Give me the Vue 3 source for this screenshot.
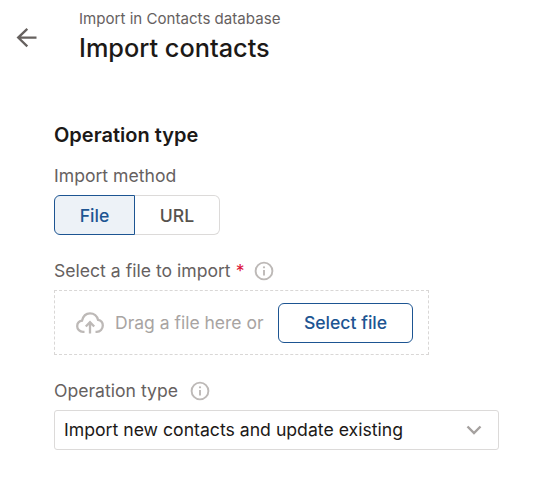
<script setup>
</script>

<template>
  <div class="page">
    <header class="head">
      <button class="back" aria-label="Back">
        <svg width="24" height="24" viewBox="0 0 24 24" fill="none" stroke="#66615f" stroke-width="2.3">
          <path d="M21.5 12.6H3.5M12.3 3.8L3.2 12.6L12.3 21.4" />
        </svg>
      </button>
      <div class="titles">
        <div class="crumb">Import in Contacts database</div>
        <h1 class="title">Import contacts</h1>
      </div>
    </header>
    <main class="form">
      <h2 class="section">Operation type</h2>
      <div class="label first">Import method</div>
      <div class="toggle">
        <button class="seg active">File</button>
        <button class="seg">URL</button>
      </div>
      <div class="label second">
        <span>Select a file to import</span><span class="req">*</span>
        <svg class="info" width="20" height="20" viewBox="0 0 20 20" fill="none">
          <circle cx="10" cy="10" r="8.4" stroke="#bdb9b7" stroke-width="1.9" />
          <circle cx="10" cy="6.3" r="1.1" fill="#bdb9b7" />
          <path d="M10 9v5.5" stroke="#bdb9b7" stroke-width="1.9" />
        </svg>
      </div>
      <div class="drop">
        <svg class="cloud" width="28" height="22" viewBox="0 0 28 22" fill="none" stroke="#bdb9b7" stroke-width="2.3">
          <path d="M8.5 19.8H7C3.7 19.8 1.2 17.3 1.2 14.2C1.2 11.4 3.2 9.2 6 8.7C7 4.4 10 1.3 14 1.3C18 1.3 21.2 4 22 7.8C24.8 8.2 26.8 10.6 26.8 13.6C26.8 17 24.2 19.8 20.8 19.8H19.5" />
          <path d="M14 21.5V10.5M9.8 14.5L14 10.2L18.2 14.5" />
        </svg>
        <span class="drag">Drag a file here or</span>
        <button class="select">Select file</button>
      </div>
      <div class="label third">
        <span>Operation type</span>
        <svg class="info wide" width="20" height="20" viewBox="0 0 20 20" fill="none">
          <circle cx="10" cy="10" r="8.4" stroke="#bdb9b7" stroke-width="1.9" />
          <circle cx="10" cy="6.3" r="1.1" fill="#bdb9b7" />
          <path d="M10 9v5.5" stroke="#bdb9b7" stroke-width="1.9" />
        </svg>
      </div>
      <div class="select-box">
        <span class="value">Import new contacts and update existing</span>
        <svg width="16" height="10" viewBox="0 0 16 10" fill="none" stroke="#a5a19f" stroke-width="2.4">
          <path d="M1.5 1.5L8 8L14.5 1.5" />
        </svg>
      </div>
    </main>
  </div>
</template>

<style>
html, body { margin: 0; background: #fff; }
</style>

<style scoped>
.page {
  width: 550px;
  height: 480px;
  overflow: hidden;
  font-family: Inter, "Liberation Sans", sans-serif;
  color: #1c1917;
  box-sizing: border-box;
}
.head {
  display: flex;
  padding: 10px 0 0 15px;
}
.back {
  border: 0;
  background: none;
  padding: 0;
  width: 24px;
  height: 24px;
  margin-top: 15px;
  display: block;
}
.titles { margin-left: 40px; }
.crumb {
  font-size: 15.1px;
  line-height: 18px;
  color: #66615f;
}
.title {
  margin: 3px 0 0;
  font-size: 25.3px;
  line-height: 33px;
  font-weight: 500;
  color: #1c1917;
}
.form {
  padding: 0 0 0 54px;
  width: 445px;
}
.section {
  margin: 58px 0 0;
  font-size: 20px;
  line-height: 26px;
  font-weight: 600;
}
.label {
  display: flex;
  align-items: center;
  font-size: 17.6px;
  line-height: 22px;
  color: #66615f;
}
.first { margin-top: 17px; }
.second { margin-top: 25px; }
.third { margin-top: 25px; }
.req {
  color: #dc143c;
  margin-left: 5px;
}
.info { margin-left: 10px; }
.info.wide { margin-left: 12px; }
.toggle {
  display: flex;
  margin-top: 8px;
  width: 166px;
  height: 40px;
}
.seg {
  flex: 1;
  font: 500 17.6px Inter, "Liberation Sans", sans-serif;
  color: #57534e;
  background: #fff;
  border: 1px solid #dcdad9;
  border-left: 0;
  border-radius: 0 6px 6px 0;
  padding: 0;
}
.seg.active {
  flex: none;
  width: 81px;
  color: #1d5592;
  background: #edf2f7;
  border: 1px solid #1d5592;
  border-radius: 6px 0 0 6px;
}
.drop {
  box-sizing: border-box;
  display: flex;
  align-items: center;
  margin-top: 8px;
  width: 375px;
  height: 65px;
  border: 1px dashed #d9d7d6;
  padding: 0 15px 0 21px;
}
.cloud { flex: none; }
.drag {
  margin-left: 11px;
  font-size: 17.5px;
  color: #a8a4a2;
}
.select {
  box-sizing: border-box;
  margin-left: auto;
  width: 135px;
  height: 40px;
  border: 1px solid #1d5592;
  border-radius: 6px;
  background: #fff;
  color: #1d5592;
  font: 500 17.6px Inter, "Liberation Sans", sans-serif;
  padding: 0;
}
.select-box {
  box-sizing: border-box;
  margin-top: 8px;
  width: 445px;
  height: 40px;
  display: flex;
  align-items: center;
  justify-content: space-between;
  border: 1px solid #dcdad9;
  border-radius: 3px;
  padding: 0 16px 0 9px;
  font-size: 17.65px;
  color: #1c1917;
}
.value { margin-top: -2px; }
</style>
